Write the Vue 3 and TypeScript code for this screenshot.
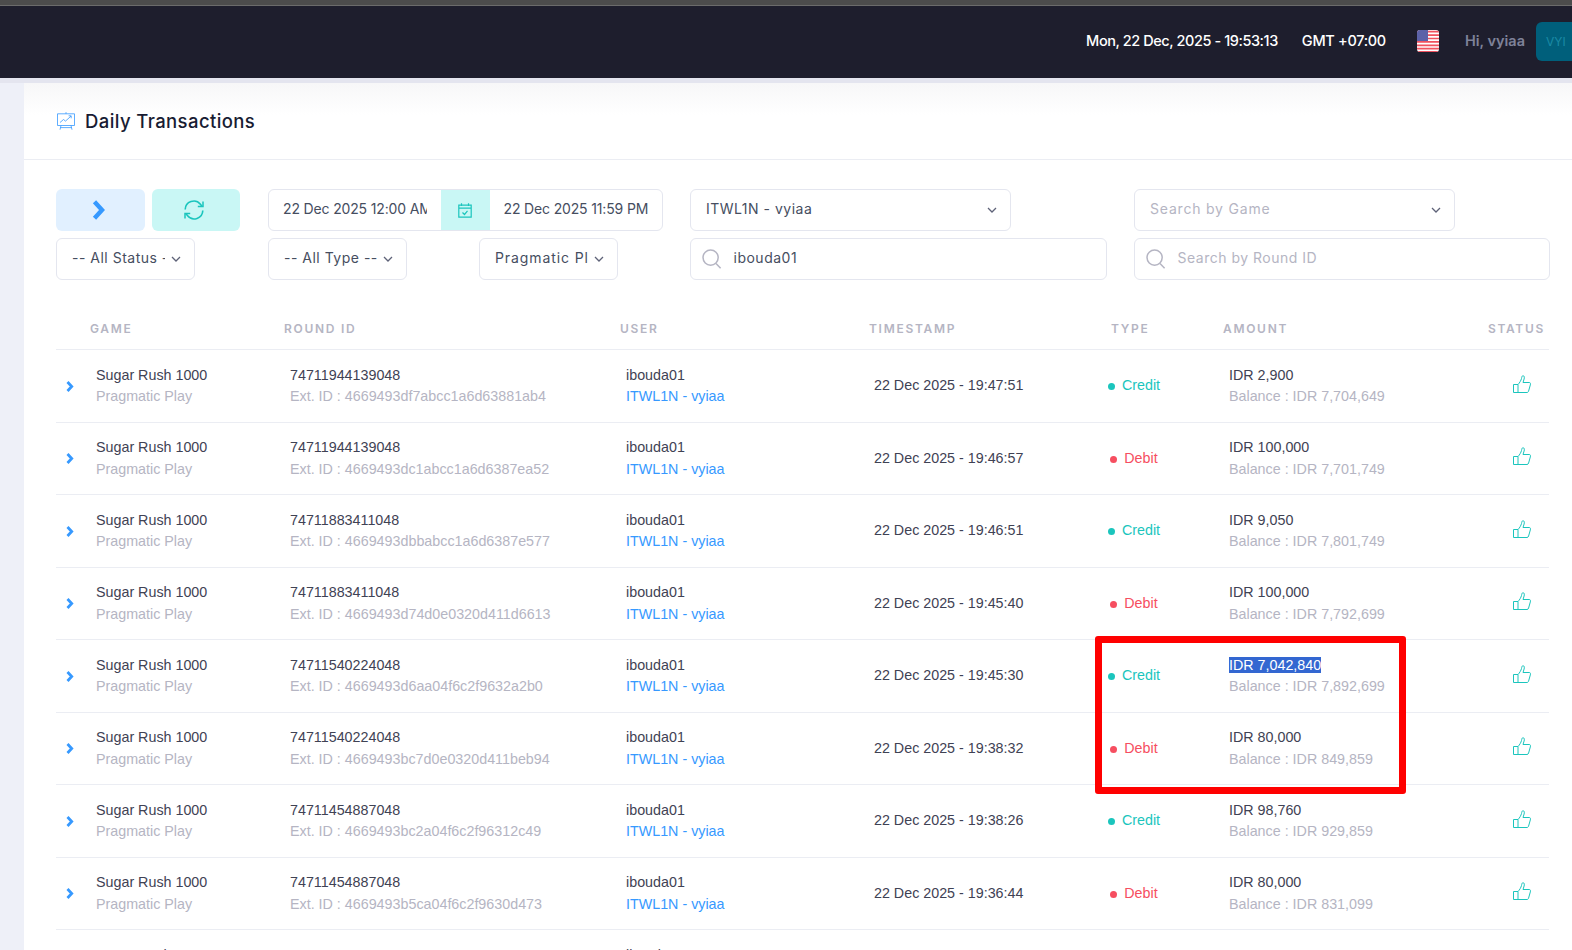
<script setup lang="ts">
interface Tx {
  round: string;
  ext: string;
  time: string;
  type: 'Credit' | 'Debit';
  amount: string;
  balance: string;
  selected?: boolean;
}

const transactions: Tx[] = [
  { round: '74711944139048', ext: '4669493df7abcc1a6d63881ab4', time: '19:47:51', type: 'Credit', amount: '2,900', balance: '7,704,649' },
  { round: '74711944139048', ext: '4669493dc1abcc1a6d6387ea52', time: '19:46:57', type: 'Debit', amount: '100,000', balance: '7,701,749' },
  { round: '74711883411048', ext: '4669493dbbabcc1a6d6387e577', time: '19:46:51', type: 'Credit', amount: '9,050', balance: '7,801,749' },
  { round: '74711883411048', ext: '4669493d74d0e0320d411d6613', time: '19:45:40', type: 'Debit', amount: '100,000', balance: '7,792,699' },
  { round: '74711540224048', ext: '4669493d6aa04f6c2f9632a2b0', time: '19:45:30', type: 'Credit', amount: '7,042,840', balance: '7,892,699', selected: true },
  { round: '74711540224048', ext: '4669493bc7d0e0320d411beb94', time: '19:38:32', type: 'Debit', amount: '80,000', balance: '849,859' },
  { round: '74711454887048', ext: '4669493bc2a04f6c2f96312c49', time: '19:38:26', type: 'Credit', amount: '98,760', balance: '929,859' },
  { round: '74711454887048', ext: '4669493b5ca04f6c2f9630d473', time: '19:36:44', type: 'Debit', amount: '80,000', balance: '831,099' },
  { round: '74711351870048', ext: '4669493b1ca04f6c2f9630c218', time: '19:36:38', type: 'Credit', amount: '80,000', balance: '911,099' }
];
</script>

<template>
  <div class="page">
    <div class="browser-strip" />
    <header class="topbar">
      <span class="clock">Mon, 22 Dec, 2025 - 19:53:13</span>
      <span class="zone">GMT +07:00</span>
      <svg class="flag" viewBox="0 0 22 22">
        <defs>
          <clipPath id="flag-clip"><rect width="22" height="22" rx="3" /></clipPath>
        </defs>
        <g clip-path="url(#flag-clip)">
          <rect width="22" height="22" fill="#fff" />
          <path d="M0 1.7h22M0 5.1h22M0 8.5h22M0 11.9h22M0 15.3h22M0 18.7h22" stroke="#f0525f" stroke-width="1.7" />
          <rect y="21" width="22" height="1" fill="#f0525f" />
          <rect width="11" height="11" fill="#5c62a8" />
        </g>
      </svg>
      <span class="hello">Hi, vyiaa</span>
      <span class="avatar">VYI</span>
    </header>

    <main class="content">
      <section class="card">
        <div class="card-head">
          <svg class="chart-icon" viewBox="0 0 18 18" fill="none" stroke="#3699ff" stroke-width=".8">
            <path d="M.5 1.8h17v11.7H.5zM9 .2v1.6M4 13.5l-1 4.2M14 13.5l1 4.2M3.400 15.600h11.200" />
            <path d="M3 10.500l3.500-3 2 1.600 5.500-5M11.600 3.800h2.600v2.500" />
          </svg>
          <h1>Daily Transactions</h1>
        </div>

        <div class="card-body">
          <div class="filters">
            <div class="actions">
              <button class="btn btn-blue" type="button">
                <svg class="btn-icon" width="14" height="20" viewBox="0 0 14 20" fill="none" stroke="#3699ff" stroke-width="4.4">
                  <path d="M2.500 1.800 10 10l-7.500 8.200" />
                </svg>
              </button>
              <button class="btn btn-teal" type="button">
                <svg class="btn-icon" width="22" height="22" viewBox="0 0 22 22" fill="none" stroke="#1bc5bd" stroke-width="1.6">
                  <path d="M2.200 10.500A8.600 8.600 0 0 1 17.400 5.200l1.600 2" />
                  <path d="M19.800 11.500A8.600 8.600 0 0 1 4.600 16.800l-1.600-2" />
                  <path d="M20 2.400v5.200h-5.200M2 19.600v-5.200h5.200" stroke-width="1.5" />
                </svg>
              </button>
            </div>

            <div class="dates">
              <div class="date-field first"><span>22 Dec 2025 12:00 AM</span></div>
              <div class="date-addon">
                <svg width="14" height="15" viewBox="0 0 14 15" fill="none" stroke="#1bc5bd" stroke-width="1.2">
                  <path d="M.8 2.200h12.400v12H.8zM.8 5.200h12.400M3.500.3v2.600M10.500.3v2.600" />
                  <path d="M4.500 9.500l2 2 3-3.600" />
                </svg>
              </div>
              <div class="date-field"><span>22 Dec 2025 11:59 PM</span></div>
            </div>

            <div class="select wide">
              <span class="value">ITWL1N - vyiaa</span>
              <svg class="caret" viewBox="0 0 10 6" fill="none" stroke="#5e6278" stroke-width="1.3"><path d="M1 1l4 4 4-4" /></svg>
            </div>

            <div class="select wide">
              <span class="value muted">Search by Game</span>
              <svg class="caret" viewBox="0 0 10 6" fill="none" stroke="#5e6278" stroke-width="1.3"><path d="M1 1l4 4 4-4" /></svg>
            </div>

            <div class="select small">
              <span class="value">-- All Status --</span>
              <svg class="caret" viewBox="0 0 10 6" fill="none" stroke="#5e6278" stroke-width="1.3"><path d="M1 1l4 4 4-4" /></svg>
            </div>

            <div class="pair">
              <div class="select small">
                <span class="value">-- All Type --</span>
                <svg class="caret" viewBox="0 0 10 6" fill="none" stroke="#5e6278" stroke-width="1.3"><path d="M1 1l4 4 4-4" /></svg>
              </div>
              <div class="select small">
                <span class="value brand">Pragmatic Play</span>
                <svg class="caret" viewBox="0 0 10 6" fill="none" stroke="#5e6278" stroke-width="1.3"><path d="M1 1l4 4 4-4" /></svg>
              </div>
            </div>

            <div class="search">
              <svg class="lens" viewBox="0 0 20 20" fill="none" stroke="#b5b5c3" stroke-width="1.5">
                <circle cx="8.600" cy="8.600" r="7.600" /><path d="M14 14.400l4.600 4.800" />
              </svg>
              <span>ibouda01</span>
            </div>

            <div class="search">
              <svg class="lens" viewBox="0 0 20 20" fill="none" stroke="#b5b5c3" stroke-width="1.5">
                <circle cx="8.600" cy="8.600" r="7.600" /><path d="M14 14.400l4.600 4.800" />
              </svg>
              <span class="muted">Search by Round ID</span>
            </div>
          </div>

          <div class="table">
            <div class="row head">
              <span />
              <span>Game</span>
              <span>Round ID</span>
              <span>User</span>
              <span>Timestamp</span>
              <span class="th-type">Type</span>
              <span>Amount</span>
              <span class="th-status">Status</span>
            </div>

            <div v-for="(tx, i) in transactions" :key="i" class="row">
              <svg class="expand" viewBox="0 0 8 11" fill="none" stroke="#3699ff" stroke-width="2.8">
                <path d="M1.500 1l4.200 4.500L1.500 10" />
              </svg>
              <div class="cell">
                <div class="main">Sugar Rush 1000</div>
                <div class="sub">Pragmatic Play</div>
              </div>
              <div class="cell">
                <div class="main">{{ tx.round }}</div>
                <div class="sub">Ext. ID : {{ tx.ext }}</div>
              </div>
              <div class="cell">
                <div class="main">ibouda01</div>
                <div class="link">ITWL1N - vyiaa</div>
              </div>
              <div class="cell stamp">22 Dec 2025 - {{ tx.time }}</div>
              <div class="type-cell">
                <span class="type" :class="tx.type === 'Credit' ? 'credit' : 'debit'">
                  <i class="dot" />{{ tx.type }}
                </span>
              </div>
              <div class="cell">
                <div class="main"><span :class="{ selected: tx.selected }">IDR {{ tx.amount }}</span></div>
                <div class="sub">Balance : IDR {{ tx.balance }}</div>
              </div>
              <svg class="thumb" viewBox="0 0 18 18" fill="none" stroke="#1bc5bd" stroke-width="1">
                <path d="M.5 9.500H5v8H.5z" />
                <path d="M5 9.500c1.600-1.600 3-4 3.500-6C8.800 2 9 .7 10 .7c1.300 0 1.600 1.700 1.100 3.300L10 7.500h6.400c1.100 0 1.300 1.300.9 2.500l-1.700 6c-.3 1-.8 1.500-1.600 1.500H5" />
              </svg>
            </div>
          </div>
        </div>
      </section>
    </main>

    <div class="annotation" />
  </div>
</template>

<style>
html,
body {
  margin: 0;
  height: 100%;
  overflow: hidden;
}
</style>

<style scoped>
.page {
  position: relative;
  width: 1572px;
  height: 950px;
  overflow: hidden;
  background: #eef0f8;
  font-family: "Inter", "Liberation Sans", sans-serif;
  color: #3f4254;
}

.browser-strip {
  height: 5px;
  background: #4c4c4c;
  border-bottom: 1px solid #6b6b6b;
}

.topbar {
  height: 72px;
  box-sizing: border-box;
  padding-bottom: 2px;
  background: #1e1e2d;
  display: flex;
  align-items: center;
  justify-content: flex-end;
  font-size: 14.5px;
  color: #fff;
  margin-right: -40px;
}

.clock {
  font-weight: 500;
  letter-spacing: -0.43px;
  margin: 0 24px 2px 0;
}

.zone {
  font-weight: 500;
  letter-spacing: -0.3px;
  margin: 0 31px 2px 0;
}

.flag {
  width: 22px;
  height: 22px;
  margin-right: 26px;
}

.hello {
  color: #7e8299;
  font-weight: 600;
  margin: 0 11px 2px 0;
}

.avatar {
  width: 76px;
  height: 39px;
  border-radius: 6px;
  background: #005f7b;
  color: #1a8aa5;
  font-size: 12px;
  display: flex;
  align-items: center;
  padding-left: 10px;
  box-sizing: border-box;
}

.content {
  border-top: 5px solid #e4e5ef;
  padding-left: 24px;
}

.card {
  width: 1548px;
  background: #fff;
  border-radius: 6px 0 0 0;
}

.card-head {
  height: 77px;
  box-sizing: border-box;
  border-bottom: 1px solid #ebedf3;
  background: linear-gradient(to bottom, #f7f7f8, #fff 32px);
  display: flex;
  align-items: center;
  padding: 0 0 1px 33px;
  gap: 10px;
}

.card-head h1 {
  margin: 0;
  font-size: 18.5px;
  font-weight: 500;
  letter-spacing: 0.4px;
  color: #181c32;
}

.chart-icon {
  width: 18px;
  height: 18px;
}

.card-body {
  padding: 29px 23px 0 32px;
}

.filters {
  display: grid;
  grid-template-columns: 185px 395px 417px 416px;
  column-gap: 27px;
  row-gap: 7.5px;
  grid-auto-rows: 41.5px;
  font-size: 14px;
  color: #464e5f;
}

.actions {
  display: flex;
  gap: 7px;
}

.btn {
  width: 89px;
  border: 0;
  border-radius: 6px;
  display: flex;
  align-items: center;
  justify-content: center;
  padding: 0;
}

.btn-icon {
  margin-right: 4px;
}

.btn-blue {
  background: #e1f0ff;
}

.btn-teal {
  width: 88px;
  background: #c9f7f5;
}

.dates {
  display: flex;
  border: 1px solid #e4e6ef;
  border-radius: 6px;
  overflow: hidden;
}

.date-field {
  flex: 1;
  display: flex;
  align-items: center;
  padding: 0 14px 2px;
  min-width: 0;
  letter-spacing: -0.15px;
}

.date-field.first {
  flex: 0 0 171.5px;
  box-sizing: border-box;
}

.date-field span {
  white-space: nowrap;
  overflow: hidden;
}

.date-addon {
  width: 49px;
  flex-shrink: 0;
  background: #c9f7f5;
  display: flex;
  align-items: center;
  justify-content: center;
  padding-top: 1px;
}

.select,
.search {
  box-sizing: border-box;
  border: 1px solid #e4e6ef;
  border-radius: 6px;
  background: #fff;
  display: flex;
  align-items: center;
  letter-spacing: 0.5px;
}

.select {
  padding: 0 13px 0 15px;
  gap: 6px;
}

.select.wide {
  width: 321px;
}

.select.small {
  width: 138.5px;
}

.value {
  flex: 1;
  min-width: 0;
  white-space: nowrap;
  overflow: hidden;
  padding-bottom: 2px;
}

.value.brand {
  letter-spacing: 0.9px;
}

.value.muted {
  letter-spacing: 0.8px;
}

.caret {
  width: 10px;
  height: 6px;
  flex-shrink: 0;
}

.pair {
  display: flex;
  justify-content: space-between;
  width: 349.5px;
}

.search {
  padding-left: 11px;
  gap: 11.5px;
}

.search span {
  padding-bottom: 2px;
}

.lens {
  width: 20px;
  height: 20px;
}

.muted {
  color: #b5b5c3;
}

.table {
  margin-top: 30.5px;
}

.row {
  display: grid;
  grid-template-columns: 34px 194px 336px 249px 226px 128px 257px 70px;
  height: 72.5px;
  align-items: center;
  box-sizing: border-box;
  border-bottom: 1px solid #ebedf3;
  font-family: "Liberation Sans", Arial, sans-serif;
  font-size: 14.3px;
  line-height: 21px;
}

.row.head {
  height: 40px;
  padding-bottom: 2px;
  font-family: "Inter", "Liberation Sans", sans-serif;
  font-size: 12px;
  font-weight: 600;
  color: #b5b5c3;
  letter-spacing: 1.7px;
  text-transform: uppercase;
}

.th-type {
  padding-left: 16px;
}

.th-status {
  text-align: right;
  padding-right: 5px;
}

.expand {
  width: 8px;
  height: 11px;
  margin: 1px 0 0 10px;
}

.cell {
  padding-left: 6px;
  white-space: nowrap;
}

.cell.stamp {
  padding-left: 5px;
}

.main {
  color: #3f4254;
}

.sub {
  color: #b5b5c3;
  margin-top: 0.5px;
}

.link {
  color: #3699ff;
  margin-top: 0.5px;
}

.selected {
  background: #3367d1;
  color: #fff;
}

.type-cell {
  display: flex;
}

.type {
  width: 78px;
  display: inline-flex;
  justify-content: center;
  align-items: center;
  gap: 7px;
}

.credit {
  color: #1bc5bd;
}

.debit {
  color: #f64e60;
}

.dot {
  width: 7px;
  height: 7px;
  border-radius: 50%;
  background: currentColor;
  margin-top: 2px;
}

.thumb {
  width: 18px;
  height: 18px;
  margin: -4px 0 0 33px;
}

.annotation {
  position: absolute;
  left: 1095px;
  top: 636px;
  width: 311px;
  height: 158px;
  box-sizing: border-box;
  border: 7px solid #ff0000;
  border-radius: 3px;
}
</style>
